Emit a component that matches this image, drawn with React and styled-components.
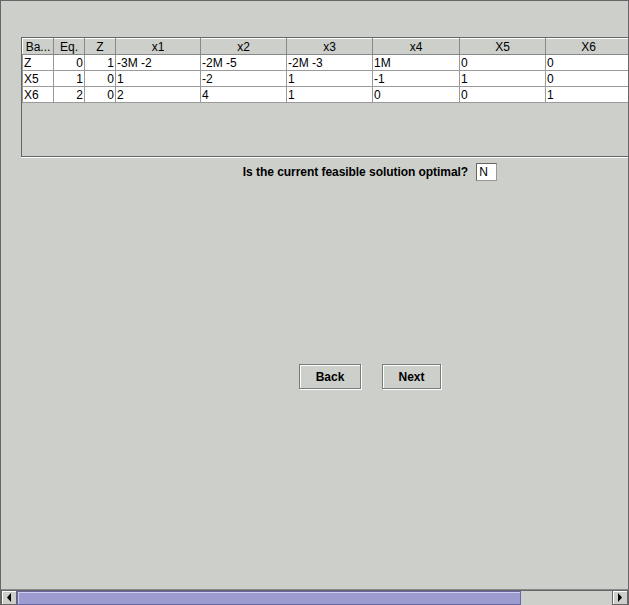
import React from "react";
import styled, { createGlobalStyle } from "styled-components";

const Global = createGlobalStyle`
  html, body { margin: 0; padding: 0; background: #cdcfcb; }
  body { font-family: "Liberation Sans", Arial, sans-serif; font-size: 12px; color: #000; }
`;

const Frame = styled.div`
  box-sizing: border-box;
  width: 629px;
  height: 605px;
  border-top: 1px solid #666;
  border-left: 1px solid #666;
  border-right: 1px solid #666;
  background: #cdcfcb;
  display: flex;
  flex-direction: column;
  overflow: hidden;
`;

const Viewport = styled.div`
  flex: 1;
  overflow: hidden;
`;

const Content = styled.div`
  width: 736px;
  padding-top: 36px;
  display: flex;
  flex-direction: column;
`;

const ScrollPane = styled.div`
  box-sizing: border-box;
  margin-left: 20px;
  width: 710px;
  height: 120px;
  border-top: 1px solid #666;
  border-left: 1px solid #666;
  border-bottom: 1px solid #666;
  box-shadow: 0 1px 0 #fff;
  overflow: hidden;
`;

const Table = styled.table`
  border-collapse: collapse;
  table-layout: fixed;
  width: ${(p) => p.$w}px;
  font-size: 12px;
`;

const Th = styled.th`
  box-sizing: border-box;
  width: ${(p) => p.$w}px;
  height: 16px;
  padding: 0;
  font-weight: normal;
  text-align: center;
  background: #cdcfcb;
  border-top: 1px solid #fff;
  border-left: 1px solid #fff;
  border-right: 1px solid #888;
  border-bottom: 1px solid #888;
  line-height: 14px;
  white-space: nowrap;
  overflow: hidden;
`;

const Td = styled.td`
  box-sizing: border-box;
  height: 16px;
  padding: 0 1px;
  background: #fff;
  border: 1px solid #9a9a9a;
  line-height: 14px;
  text-align: ${(p) => (p.$num ? "right" : "left")};
  white-space: nowrap;
  overflow: hidden;
`;

const QuestionRow = styled.div`
  margin-top: 6px;
  display: flex;
  justify-content: center;
  align-items: center;
  gap: 8px;
  height: 18px;
  padding-left: 2px;
`;

const Label = styled.span`
  font-weight: bold;
  font-size: 12px;
  letter-spacing: -0.05px;
`;

const Field = styled.div`
  box-sizing: border-box;
  width: 21px;
  height: 18px;
  background: #fff;
  border-top: 1px solid #666;
  border-left: 1px solid #666;
  border-right: 1px solid #999;
  border-bottom: 1px solid #999;
  padding-left: 2px;
  line-height: 16px;
  font-size: 12px;
`;

const ButtonRow = styled.div`
  margin-top: 183px;
  display: flex;
  justify-content: center;
  gap: 21px;
  padding-left: 2px;
`;

const Button = styled.button`
  box-sizing: border-box;
  width: ${(p) => p.$w}px;
  height: 25px;
  padding: 0;
  background: #cdcfcb;
  border: 1px solid #7a7a7a;
  box-shadow: inset 1px 1px 0 #fff, 1px 1px 0 #fff;
  font-family: "Liberation Sans", Arial, sans-serif;
  font-weight: bold;
  font-size: 12px;
  color: #000;
`;

const ScrollBar = styled.div`
  height: 16px;
  display: flex;
  border-top: 1px solid #888;
  box-sizing: border-box;
  background: #cdcfcb;
`;

const ArrowBtn = styled.div`
  box-sizing: border-box;
  width: 16px;
  height: 15px;
  display: flex;
  align-items: center;
  justify-content: center;
  border: 1px solid #666;
  box-shadow: inset 1px 1px 0 #fff;
  background: #cdcfcb;
`;

const Track = styled.div`
  flex: 1;
  display: flex;
  border-top: 1px solid #666;
  background: #cdcfcb;
`;

const Thumb = styled.div`
  box-sizing: border-box;
  width: 504px;
  height: 14px;
  border: 1px solid #6666a0;
  background-color: #9c9cd0;
  background-image: radial-gradient(#c8c8ec 0.6px, transparent 0.7px),
    radial-gradient(#7878b0 0.6px, transparent 0.7px);
  background-size: 4px 4px;
  background-position: 0 0, 2px 2px;
  box-shadow: inset 1px 1px 0 #ccccf0;
`;

const cols = [31, 31, 31, 85, 86, 86, 87, 86, 86];
const headers = ["Ba...", "Eq.", "Z", "x1", "x2", "x3", "x4", "X5", "X6"];
const rows = [
  ["Z", "0", "1", "-3M -2", "-2M -5", "-2M -3", "1M", "0", "0"],
  ["X5", "1", "0", "1", "-2", "1", "-1", "1", "0"],
  ["X6", "2", "0", "2", "4", "1", "0", "0", "1"],
];
const tableWidth = cols.reduce((a, b) => a + b, 0);

export default function App() {
  return (
    <>
      <Global />
      <Frame>
        <Viewport>
          <Content>
            <ScrollPane>
              <Table $w={tableWidth}>
                <thead>
                  <tr>
                    {headers.map((h, i) => (
                      <Th key={h} $w={cols[i]}>
                        {h}
                      </Th>
                    ))}
                  </tr>
                </thead>
                <tbody>
                  {rows.map((r, ri) => (
                    <tr key={ri}>
                      {r.map((c, ci) => (
                        <Td key={ci} $num={ci === 1 || ci === 2}>
                          {c}
                        </Td>
                      ))}
                    </tr>
                  ))}
                </tbody>
              </Table>
            </ScrollPane>
            <QuestionRow>
              <Label>Is the current feasible solution optimal?</Label>
              <Field>N</Field>
            </QuestionRow>
            <ButtonRow>
              <Button $w={62}>Back</Button>
              <Button $w={59}>Next</Button>
            </ButtonRow>
          </Content>
        </Viewport>
        <ScrollBar>
          <ArrowBtn>
            <svg width="6" height="9" viewBox="0 0 6 9">
              <path d="M5 0 L1 4.5 L5 9 Z" fill="#000" />
            </svg>
          </ArrowBtn>
          <Track>
            <Thumb />
          </Track>
          <ArrowBtn>
            <svg width="6" height="9" viewBox="0 0 6 9">
              <path d="M1 0 L5 4.5 L1 9 Z" fill="#000" />
            </svg>
          </ArrowBtn>
        </ScrollBar>
      </Frame>
    </>
  );
}
